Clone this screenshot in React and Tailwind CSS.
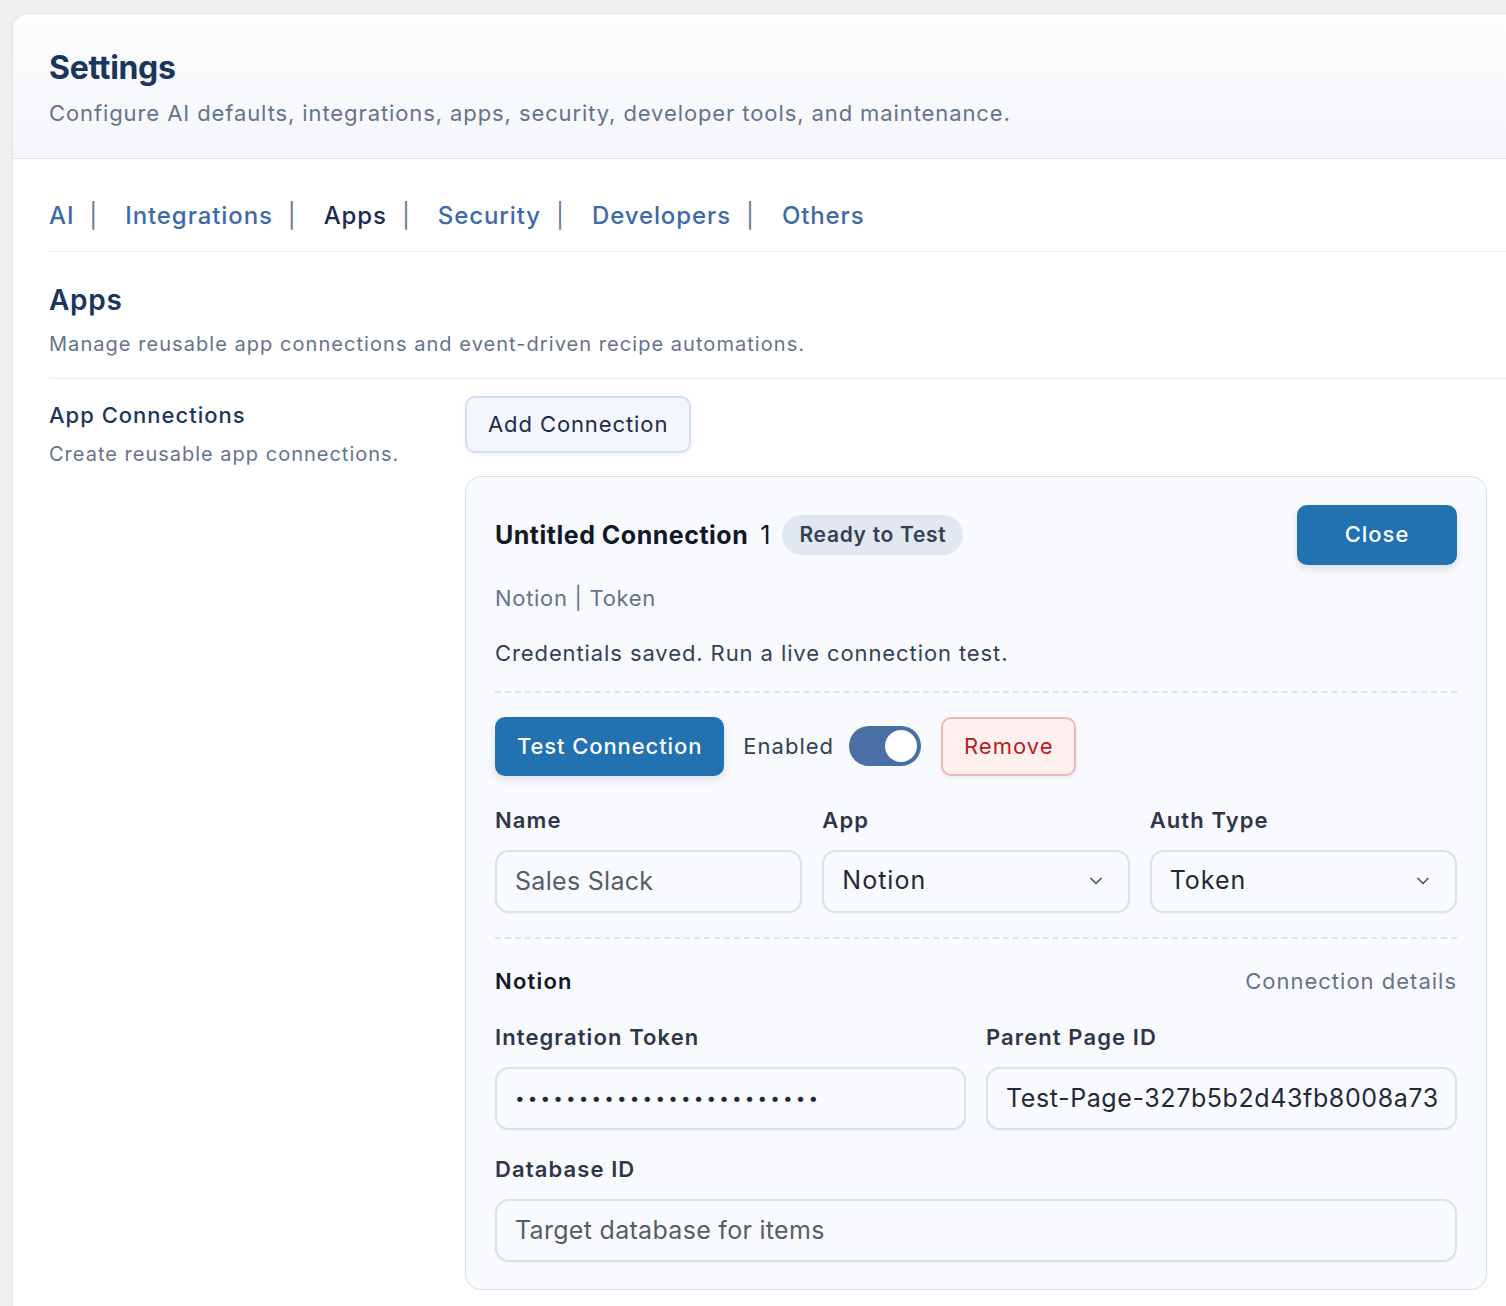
import { ChevronDown } from 'lucide-react'

const tabs = ['AI', 'Integrations', 'Apps', 'Security', 'Developers', 'Others']

function Field({ label, children }) {
  return (
    <div className="flex flex-col min-w-0">
      <div className="text-[22px] leading-[30px] font-semibold text-[#2d3748] tracking-[1.1px]">{label}</div>
      <div className="mt-[15px]">{children}</div>
    </div>
  )
}

const inputCls =
  'w-full h-[63px] rounded-[14px] border-2 border-[#d6e2f0] bg-[#f8fafd] px-[18px] text-[25px] text-[#1f2937] outline-none placeholder:text-[#555d69] shadow-[0_1px_2px_rgba(15,23,42,0.04)]'

function SelectBox({ value }) {
  return (
    <div className="w-full h-[63px] rounded-[14px] border-2 border-[#d6e2f0] bg-[#f8fafd] pl-[18px] pr-[22px] flex items-center justify-between text-[25px] tracking-[1px] text-[#1f2937] shadow-[0_1px_2px_rgba(15,23,42,0.04)]">
      <span>{value}</span>
      <ChevronDown size={20} strokeWidth={2} className="text-[#4b5563]" />
    </div>
  )
}

export default function App() {
  return (
    <div className="min-h-screen bg-[#efefef] pt-[13px] pl-[12px] overflow-hidden" style={{ fontFamily: 'Inter, "Noto Sans", sans-serif' }}>
      <div className="w-[1520px] min-h-[1300px] bg-white border border-[#dde5ee] rounded-tl-[16px]">
        <div className="rounded-tl-[16px] bg-gradient-to-b from-[#fcfdfe] to-[#f4f6fa] border-b border-[#dde4ec] px-[36px] pt-[34px] pb-[30px]">
          <h1 className="text-[32px] leading-[40px] font-bold text-[#1a365d] tracking-[-0.3px]">Settings</h1>
          <p className="mt-[10px] text-[22px] leading-[30px] text-[#64748b] tracking-[0.9px]">
            Configure AI defaults, integrations, apps, security, developer tools, and maintenance.
          </p>
        </div>

        <div className="pl-[36px]">
          <nav className="flex items-center pt-[41px] pb-[19px] border-b border-[#e8eef5] text-[24px] leading-[32px] font-medium tracking-[0.9px]">
            {tabs.map((t, i) => (
              <div key={t} className="flex items-center">
                <span className={t === 'Apps' ? 'text-[#1b2b4b]' : 'text-[#3e6aa6]'}>{t}</span>
                {i < tabs.length - 1 && <span className="ml-[15px] mr-[27px] text-[#6b7a90] font-normal">|</span>}
              </div>
            ))}
          </nav>

          <div className="pt-[30px] pb-[20px] border-b border-[#e8eef5]">
            <h2 className="text-[28px] leading-[36px] font-semibold text-[#1a365d] tracking-[0.75px]">Apps</h2>
            <p className="mt-[12px] text-[20px] leading-[28px] text-[#64748b] tracking-[1.05px]">
              Manage reusable app connections and event-driven recipe automations.
            </p>
          </div>

          <div className="flex">
            <div className="w-[416px] shrink-0 pt-[21px]">
              <h3 className="text-[22px] leading-[30px] font-medium text-[#1a365d] tracking-[1px]">App Connections</h3>
              <p className="mt-[10px] text-[20px] leading-[28px] text-[#64748b] tracking-[1px]">Create reusable app connections.</p>
            </div>

            <div className="w-[1022px] shrink-0 pt-[17px]">
              <button className="h-[57px] px-[21px] rounded-[10px] border-2 border-[#d3dfee] bg-[#f3f6fb] text-[22px] tracking-[0.9px] text-[#1b2b4b] shadow-[0_2px_4px_rgba(15,23,42,0.06)]">
                Add Connection
              </button>

              <div className="mt-[23px] rounded-[16px] border-[1.5px] border-[#d3e0ef] bg-[#f8fafd] px-[29px] pt-[27.5px] pb-[27.5px]">
                <div className="flex items-center justify-between">
                  <div className="flex items-center">
                    <span className="text-[25px] leading-[32px] font-bold text-[#111827] tracking-[0.5px]">Untitled Connection</span>
                    <span className="ml-[12px] text-[25px] leading-[32px] text-[#111827]">1</span>
                    <span className="ml-[12px] h-[40px] px-[17px] rounded-full bg-[#e2e8f0] text-[21px] font-semibold text-[#334155] tracking-[0.7px] flex items-center">
                      Ready to Test
                    </span>
                  </div>
                  <button className="w-[160px] h-[60px] rounded-[10px] bg-[#2271b1] text-white text-[22px] font-medium tracking-[1px] shadow-[0_4px_8px_rgba(15,23,42,0.12)]">
                    Close
                  </button>
                </div>

                <p className="mt-[18px] text-[22px] leading-[30px] text-[#64748b] tracking-[0.7px]">Notion | Token</p>
                <p className="mt-[25px] text-[22px] leading-[30px] text-[#334155] tracking-[0.9px]">Credentials saved. Run a live connection test.</p>

                <div className="mt-[23px] border-t-2 border-dashed border-[#d9e4f1]" />

                <div className="mt-[24px] flex items-center">
                  <button className="h-[59px] px-[22px] rounded-[10px] bg-[#2271b1] text-white text-[22px] font-medium tracking-[0.9px] shadow-[0_4px_8px_rgba(15,23,42,0.12)]">
                    Test Connection
                  </button>
                  <span className="ml-[19px] text-[22px] text-[#334155] tracking-[1px]">Enabled</span>
                  <div className="ml-[15px] w-[72px] h-[40px] rounded-full bg-[#4a6fa5] flex items-center justify-end px-[4px]">
                    <div className="w-[32px] h-[32px] rounded-full bg-white" />
                  </div>
                  <button className="ml-[20px] h-[59px] px-[21px] rounded-[10px] border-2 border-[#f5b4b4] bg-[#fff0f0] text-[22px] text-[#b91c1c] tracking-[1px] shadow-[0_2px_4px_rgba(15,23,42,0.06)]">
                    Remove
                  </button>
                </div>

                <div className="mt-[29px] grid grid-cols-3 gap-x-[20px]">
                  <Field label="Name">
                    <input className={inputCls + ' tracking-[0.3px]'} placeholder="Sales Slack" readOnly />
                  </Field>
                  <Field label="App">
                    <SelectBox value="Notion" />
                  </Field>
                  <Field label="Auth Type">
                    <SelectBox value="Token" />
                  </Field>
                </div>

                <div className="mt-[24px] border-t-2 border-dashed border-[#d9e4f1]" />

                <div className="mt-[27px] flex items-center justify-between">
                  <span className="text-[22px] leading-[30px] font-semibold text-[#111827] tracking-[1.2px]">Notion</span>
                  <span className="text-[22px] leading-[30px] text-[#64748b] tracking-[1px]">Connection details</span>
                </div>

                <div className="mt-[26px] grid grid-cols-2 gap-x-[20px]">
                  <Field label="Integration Token">
                    <input
                      type="password"
                      className={inputCls.replace('text-[25px]', 'text-[17px]') + ' tracking-[3.2px]'}
                      value="ntn_4f8a2b9c1d7e3f6a5b0c"
                      readOnly
                    />
                  </Field>
                  <Field label="Parent Page ID">
                    <input className={inputCls + ' tracking-[0.6px]'} value="Test-Page-327b5b2d43fb8008a73459cd2e91f4a1" readOnly />
                  </Field>
                </div>

                <div className="mt-[24px]">
                  <Field label="Database ID">
                    <input className={inputCls + ' tracking-[0.3px]'} placeholder="Target database for items" readOnly />
                  </Field>
                </div>
              </div>
            </div>
          </div>
        </div>
      </div>
    </div>
  )
}
